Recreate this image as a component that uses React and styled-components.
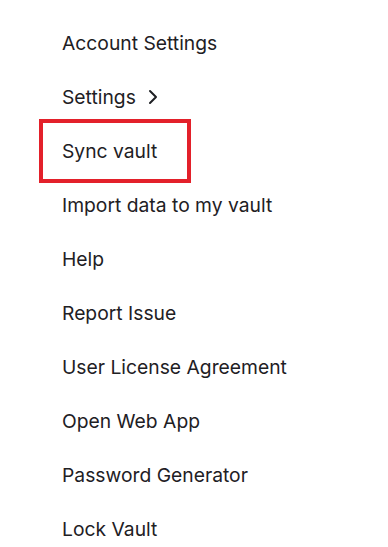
import React from 'react';
import styled, { createGlobalStyle } from 'styled-components';

const GlobalStyle = createGlobalStyle`
  html, body {
    margin: 0;
    padding: 0;
    background: #ffffff;
  }
  body {
    font-family: Inter, "Noto Sans", "Liberation Sans", sans-serif;
  }
`;

const Menu = styled.ul`
  list-style: none;
  margin: 0;
  padding: 16px 0 0 62px;
  display: flex;
  flex-direction: column;
`;

const Item = styled.li`
  position: relative;
  display: flex;
  align-items: center;
  gap: 12px;
  height: 54px;
  font-size: 19.3px;
  color: #1e2024;
  align-self: flex-start;

  ${({ $highlight }) =>
    $highlight &&
    `
    &::after {
      content: '';
      position: absolute;
      top: -5px;
      bottom: -5px;
      left: -23px;
      right: -34px;
      border: 4px solid #e3202a;
    }
  `}
`;

const Chevron = () => (
  <svg width="10" height="16" viewBox="0 0 10 16" fill="none">
    <path d="M2 2l6 6-6 6" stroke="#1e2024" strokeWidth="2" strokeLinecap="round" strokeLinejoin="round" />
  </svg>
);

const items = [
  { label: 'Account Settings' },
  { label: 'Settings', chevron: true },
  { label: 'Sync vault', highlight: true },
  { label: 'Import data to my vault' },
  { label: 'Help' },
  { label: 'Report Issue' },
  { label: 'User License Agreement' },
  { label: 'Open Web App' },
  { label: 'Password Generator' },
  { label: 'Lock Vault' },
];

export default function App() {
  return (
    <>
      <GlobalStyle />
      <Menu>
        {items.map((it) => (
          <Item key={it.label} $highlight={it.highlight}>
            {it.label}
            {it.chevron && <Chevron />}
          </Item>
        ))}
      </Menu>
    </>
  );
}
